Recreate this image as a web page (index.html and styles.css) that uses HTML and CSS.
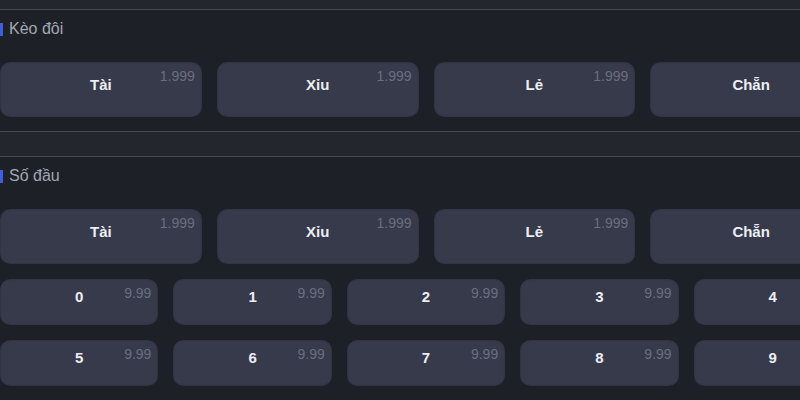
FILE: index.html
```html
<!DOCTYPE html>
<html lang="vi">
<head>
<meta charset="utf-8">
<title>Kèo</title>
<link rel="stylesheet" href="styles.css">
</head>
<body>
<div class="page">
  <section class="market">
    <h3 class="market-title"><span class="bar"></span>Kèo đôi</h3>
    <div class="grid grid-4">
      <button class="bet tall"><span class="label">Tài</span><span class="odds">1.999</span></button>
      <button class="bet tall"><span class="label">Xỉu</span><span class="odds">1.999</span></button>
      <button class="bet tall"><span class="label">Lẻ</span><span class="odds">1.999</span></button>
      <button class="bet tall"><span class="label">Chẵn</span><span class="odds">1.999</span></button>
    </div>
  </section>
  <section class="market">
    <h3 class="market-title"><span class="bar"></span>Số đầu</h3>
    <div class="grid grid-4">
      <button class="bet tall"><span class="label">Tài</span><span class="odds">1.999</span></button>
      <button class="bet tall"><span class="label">Xỉu</span><span class="odds">1.999</span></button>
      <button class="bet tall"><span class="label">Lẻ</span><span class="odds">1.999</span></button>
      <button class="bet tall"><span class="label">Chẵn</span><span class="odds">1.999</span></button>
    </div>
    <div class="grid grid-5">
      <button class="bet"><span class="label">0</span><span class="odds">9.99</span></button>
      <button class="bet"><span class="label">1</span><span class="odds">9.99</span></button>
      <button class="bet"><span class="label">2</span><span class="odds">9.99</span></button>
      <button class="bet"><span class="label">3</span><span class="odds">9.99</span></button>
      <button class="bet"><span class="label">4</span><span class="odds">9.99</span></button>
      <button class="bet"><span class="label">5</span><span class="odds">9.99</span></button>
      <button class="bet"><span class="label">6</span><span class="odds">9.99</span></button>
      <button class="bet"><span class="label">7</span><span class="odds">9.99</span></button>
      <button class="bet"><span class="label">8</span><span class="odds">9.99</span></button>
      <button class="bet"><span class="label">9</span><span class="odds">9.99</span></button>
    </div>
  </section>
</div>
</body>
</html>
```
FILE: styles.css
```css
html, body {
  margin: 0;
  padding: 0;
  background: #23262e;
  overflow: hidden;
  font-family: "Liberation Sans", Arial, sans-serif;
}

.page {
  width: 852px;
  padding-top: 9px;
  display: flex;
  flex-direction: column;
  gap: 24px;
}

.market {
  background: #1d2027;
  border-top: 1px solid #464a53;
  border-bottom: 1px solid #464a53;
  padding: 9px 0 14px;
  display: flex;
  flex-direction: column;
  gap: 15px;
}

.market-title {
  margin: 0 0 8px;
  display: flex;
  align-items: center;
  font-size: 16px;
  line-height: 20px;
  font-weight: normal;
  color: #a3a7b2;
}

.bar {
  width: 3px;
  height: 13px;
  background: #3d5ee0;
  margin-right: 6px;
}

.grid {
  display: grid;
  gap: 15px;
}

.grid-4 { grid-template-columns: repeat(4, 1fr); }
.grid-5 { grid-template-columns: repeat(5, 1fr); }

.bet {
  position: relative;
  height: 46px;
  border: none;
  border-radius: 10px;
  background: #363a4b;
  box-shadow: inset 0 0 2px rgba(0, 0, 0, 0.35);
  display: flex;
  align-items: center;
  justify-content: center;
  padding: 0 0 11px;
  font-family: inherit;
  cursor: pointer;
}

.bet.tall { height: 55px; }

.label {
  color: #eceef3;
  font-size: 15px;
  font-weight: bold;
}

.odds {
  position: absolute;
  top: 6px;
  right: 7px;
  font-size: 14px;
  color: #6a6e7e;
}
```
